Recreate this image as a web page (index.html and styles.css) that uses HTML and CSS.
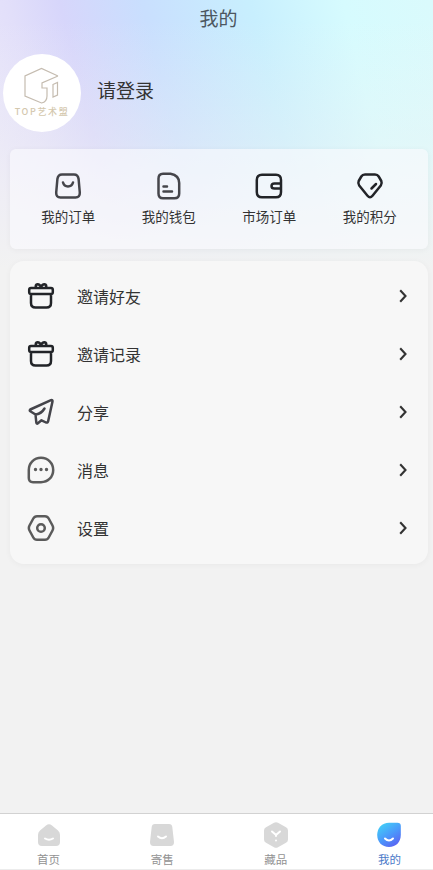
FILE: index.html
```html
<!DOCTYPE html>
<html lang="zh-CN">
<head>
<meta charset="utf-8">
<title>我的</title>
<link rel="stylesheet" href="styles.css">
</head>
<body>
<div class="page">
  <header class="title">我的</header>
  <section class="profile">
    <div class="avatar">
      <svg class="logo" width="38" height="37" viewBox="0 0 38 37"><path d="M35 9 18.500 1.500 2 9V29L18.500 36Q24 35 24 29V21H19V16L35 9M30 17.500 34.500 15.500V28L30 30Z"/></svg>
      <span class="logo-text">TOP艺术盟</span>
    </div>
    <div class="login">请登录</div>
  </section>
  <section class="card shortcuts">
    <div class="shortcut">
      <svg class="icon soft" viewBox="0 0 28 28"><path d="M8 2.500H20Q24 2.500 24.600 7L25.800 20.500Q26 25.500 21.500 25.500H6.500Q2 25.500 2.200 20.500L3.400 7Q4 2.500 8 2.500ZM9 10.500C10.500 15.800 17.500 15.800 19 10.500"/></svg>
      <span>我的订单</span>
    </div>
    <div class="shortcut">
      <svg class="icon soft" viewBox="0 0 28 28"><path d="M8 1.700H15.500Q24.200 3.200 24.200 11V21.500Q24.200 26.300 19.500 26.300H8Q3.500 26.300 3.500 21.500V6.500Q3.500 1.700 8 1.700ZM8.500 14.500H12M8.500 19.500H17"/></svg>
      <span>我的钱包</span>
    </div>
    <div class="shortcut">
      <svg class="icon" viewBox="0 0 28 28"><path d="M7 2.700H21Q26 2.700 26 8V20Q26 25.300 21 25.300H7Q1.800 25.300 1.800 20V8Q1.800 2.700 7 2.700ZM26 11.400H19.500Q16.500 11.400 16.500 14T19.500 16.600H26"/></svg>
      <span>市场订单</span>
    </div>
    <div class="shortcut">
      <svg class="icon" viewBox="0 0 28 28"><path d="M9 2.500H19Q21.500 2.500 22.700 4.500L25.300 9Q26.300 11.200 24.800 13.500L16.500 23.800Q14 26.800 11.500 23.800L3.200 13.500Q1.700 11.200 2.700 9L5.300 4.500Q6.500 2.500 9 2.500ZM15.500 16.500 20 12"/></svg>
      <span>我的积分</span>
    </div>
  </section>
  <section class="card menu">
    <div class="row">
      <svg class="icon" viewBox="0 0 28 28"><path d="M4 6H24Q25.800 6 25.800 7.800V10.200Q25.800 12 24 12H4Q2.200 12 2.200 10.200V7.800Q2.200 6 4 6ZM4 12V21Q4 25.500 8.500 25.500H19.500Q24 25.500 24 21V12"/><path d="M9 5.500Q8 2.500 10.500 2.200Q13 2.200 14 5.500Q15 2.200 17.500 2.200Q20 2.500 19 5.500"/></svg>
      <span>邀请好友</span>
      <svg class="chevron" viewBox="0 0 8 14"><path d="M1.200 1.200 6.500 7 1.200 12.800"/></svg>
    </div>
    <div class="row">
      <svg class="icon" viewBox="0 0 28 28"><path d="M4 6H24Q25.800 6 25.800 7.800V10.200Q25.800 12 24 12H4Q2.200 12 2.200 10.200V7.800Q2.200 6 4 6ZM4 12V21Q4 25.500 8.500 25.500H19.500Q24 25.500 24 21V12"/><path d="M9 5.500Q8 2.500 10.500 2.200Q13 2.200 14 5.500Q15 2.200 17.500 2.200Q20 2.500 19 5.500"/></svg>
      <span>邀请记录</span>
      <svg class="chevron" viewBox="0 0 8 14"><path d="M1.200 1.200 6.500 7 1.200 12.800"/></svg>
    </div>
    <div class="row">
      <svg class="icon soft" viewBox="0 0 28 28"><path d="M24 2.200 3.300 11.500Q2.200 12.500 3.300 13.200L8.500 16.500 9.300 24.500Q9.500 26.500 11.200 25L14.500 22.300 19 24.500Q20.800 25 21.200 23L25.500 3.500Q25.700 1.700 24 2.200ZM9 16.500Q14.500 15.500 17.500 10.500"/></svg>
      <span>分享</span>
      <svg class="chevron" viewBox="0 0 8 14"><path d="M1.200 1.200 6.500 7 1.200 12.800"/></svg>
    </div>
    <div class="row">
      <svg class="icon grey" viewBox="0 0 28 28"><path d="M14 1.800C21 1.800 26.200 7 26.200 14S21 26.200 14 26.200H6Q1.800 26.200 1.800 22V14C1.800 7 7 1.800 14 1.800Z"/><path class="dots" d="M8.500 13.500h.01M14 13.500h.01M19.500 13.500h.01"/></svg>
      <span>消息</span>
      <svg class="chevron" viewBox="0 0 8 14"><path d="M1.200 1.200 6.500 7 1.200 12.800"/></svg>
    </div>
    <div class="row">
      <svg class="icon grey" viewBox="0 0 28 28"><path d="M10 2.200H18Q20.500 2.200 21.700 4.500L25.500 11.500Q26.800 14 25.500 16.500L21.700 23.500Q20.500 25.800 18 25.800H10Q7.500 25.800 6.300 23.500L2.500 16.500Q1.200 14 2.500 11.500L6.300 4.500Q7.500 2.200 10 2.200Z"/><circle cx="14" cy="14" r="3.800"/></svg>
      <span>设置</span>
      <svg class="chevron" viewBox="0 0 8 14"><path d="M1.200 1.200 6.500 7 1.200 12.800"/></svg>
    </div>
  </section>
  <nav class="tabs">
    <div class="tab">
      <svg viewBox="0 0 26 26"><path class="shape" d="M10 3.500Q13 1 16 3.500L22 8.500Q24 10 24 13V20Q24 24 20 24H6Q2 24 2 20V13Q2 10 4 8.500Z"/><path class="smile" d="M9 16.500Q13 19 17 16.500"/></svg>
      <span>首页</span>
    </div>
    <div class="tab">
      <svg viewBox="0 0 26 26"><path class="shape" d="M6 2H20Q23 2 23.300 5L25 20Q25 24 21.500 24H4.500Q1 24 1 20L2.700 5Q3 2 6 2Z"/><path class="smile" d="M9 14.500Q13 18 17 14.500"/></svg>
      <span>寄售</span>
    </div>
    <div class="tab">
      <svg viewBox="0 0 26 26"><path class="shape" d="M11 .8Q13-.3 15 .8L23 5.200Q25 6.300 25 8.500V17.500Q25 19.700 23 20.800L15 25.200Q13 26.300 11 25.200L3 20.800Q1 19.700 1 17.500V8.500Q1 6.300 3 5.200Z"/><path class="smile" d="M9 9.500 13 13 17 9.500M13 13V14M13 18.500V18.600"/></svg>
      <span>藏品</span>
    </div>
    <div class="tab active">
      <svg viewBox="0 0 26 26"><defs><linearGradient id="drop" x1=".15" y1=".1" x2=".75" y2="1"><stop offset="0" stop-color="#43cbf7"/><stop offset=".5" stop-color="#4a99fb"/><stop offset="1" stop-color="#5b62f2"/></linearGradient></defs><path fill="url(#drop)" d="M13 .8H21.500Q24.800.8 24.800 4V13C24.800 20 20 25 13 25S1.200 20 1.200 13 6 .8 13 .8Z"/><path class="smile" d="M9 16.500Q13 20.500 17 16.500"/></svg>
      <span>我的</span>
    </div>
  </nav>
</div>
</body>
</html>
```

FILE: styles.css
```css
* { box-sizing: border-box; }
body {
  margin: 0;
  font-family: "Noto Sans CJK SC", sans-serif;
  color: #333;
  background: #f2f2f2;
}
.page {
  display: flex;
  flex-direction: column;
  height: 870px;
  overflow: hidden;
  background:
    linear-gradient(180deg, rgba(242,242,242,0) 20px, rgba(242,242,242,.35) 140px, #f2f2f2 270px) 0 0 / 100% 280px no-repeat,
    linear-gradient(76deg, #e9e6fa 25px, #e2dffa 75px, #d7d6fb 125px, #c9dffe 205px, #c8effe 310px, #d6fbfe 400px, #dafafc 485px) 0 0 / 100% 280px no-repeat,
    #f2f2f2;
}
.title {
  height: 36px;
  padding-left: 4px;
  text-align: center;
  font-size: 19px;
  line-height: 35px;
  color: #4c5660;
}
.profile {
  display: flex;
  align-items: center;
  gap: 16px;
  height: 113px;
  padding: 0 3px;
}
.avatar {
  display: flex;
  flex-direction: column;
  align-items: center;
  width: 78px;
  height: 78px;
  padding-top: 13px;
  border-radius: 50%;
  background: #fff;
}
.logo {
  fill: none;
  stroke: #c5bcb0;
  stroke-width: 1.2;
}
.logo-text {
  margin-top: 2px;
  font-size: 9px;
  font-weight: 500;
  line-height: 12px;
  letter-spacing: 1.6px;
  white-space: nowrap;
  color: #d4c8ae;
}
.login {
  font-size: 19px;
  line-height: 28px;
  margin-top: -5px;
}
.card {
  flex: none;
  margin: 0 5px 0 10px;
  background: #f7f7f7;
  box-shadow: 0 1px 6px rgba(0,0,0,.045);
}
.shortcuts {
  display: grid;
  grid-template-columns: repeat(4, 1fr);
  height: 100px;
  padding: 23px 8px 0;
  border-radius: 6px;
  background: rgba(250,250,253,.62);
}
.shortcut {
  display: flex;
  flex-direction: column;
  align-items: center;
  gap: 6px;
  font-size: 13.5px;
  line-height: 20px;
}
.icon {
  flex: none;
  width: 28px;
  height: 28px;
  fill: none;
  stroke: #222428;
  stroke-width: 2.5;
  stroke-linejoin: round;
  stroke-linecap: round;
}
.icon.soft { stroke: #45454b; }
.icon.grey { stroke: #5b5b5b; }
.icon .dots { stroke-width: 3.4; }
.menu {
  height: 303px;
  margin-top: 12px;
  padding: 6px 21px 7px 17px;
  border-radius: 14px;
}
.row {
  display: flex;
  align-items: center;
  height: 58px;
  font-size: 16px;
}
.row > span {
  flex: 1;
  margin-left: 22px;
  padding-bottom: 1px;
}
.chevron {
  width: 8px;
  height: 14px;
  fill: none;
  stroke: #333;
  stroke-width: 2.1;
}
.tabs {
  display: flex;
  justify-content: space-between;
  height: 57px;
  margin-top: auto;
  padding: 8px 23px 0 28px;
  border-top: 1px solid #d2d2d2;
  border-bottom: 1px solid #ececec;
  background: #fff;
}
.tab {
  display: flex;
  flex-direction: column;
  align-items: center;
  gap: 3px;
  width: 41px;
  font-size: 11.5px;
  line-height: 16px;
  color: #929292;
}
.tab svg {
  width: 26px;
  height: 26px;
}
.tab.active { color: #4b79c8; }
.shape { fill: #d8d8d8; }
.smile {
  fill: none;
  stroke: #fff;
  stroke-width: 2;
  stroke-linecap: round;
}
```
